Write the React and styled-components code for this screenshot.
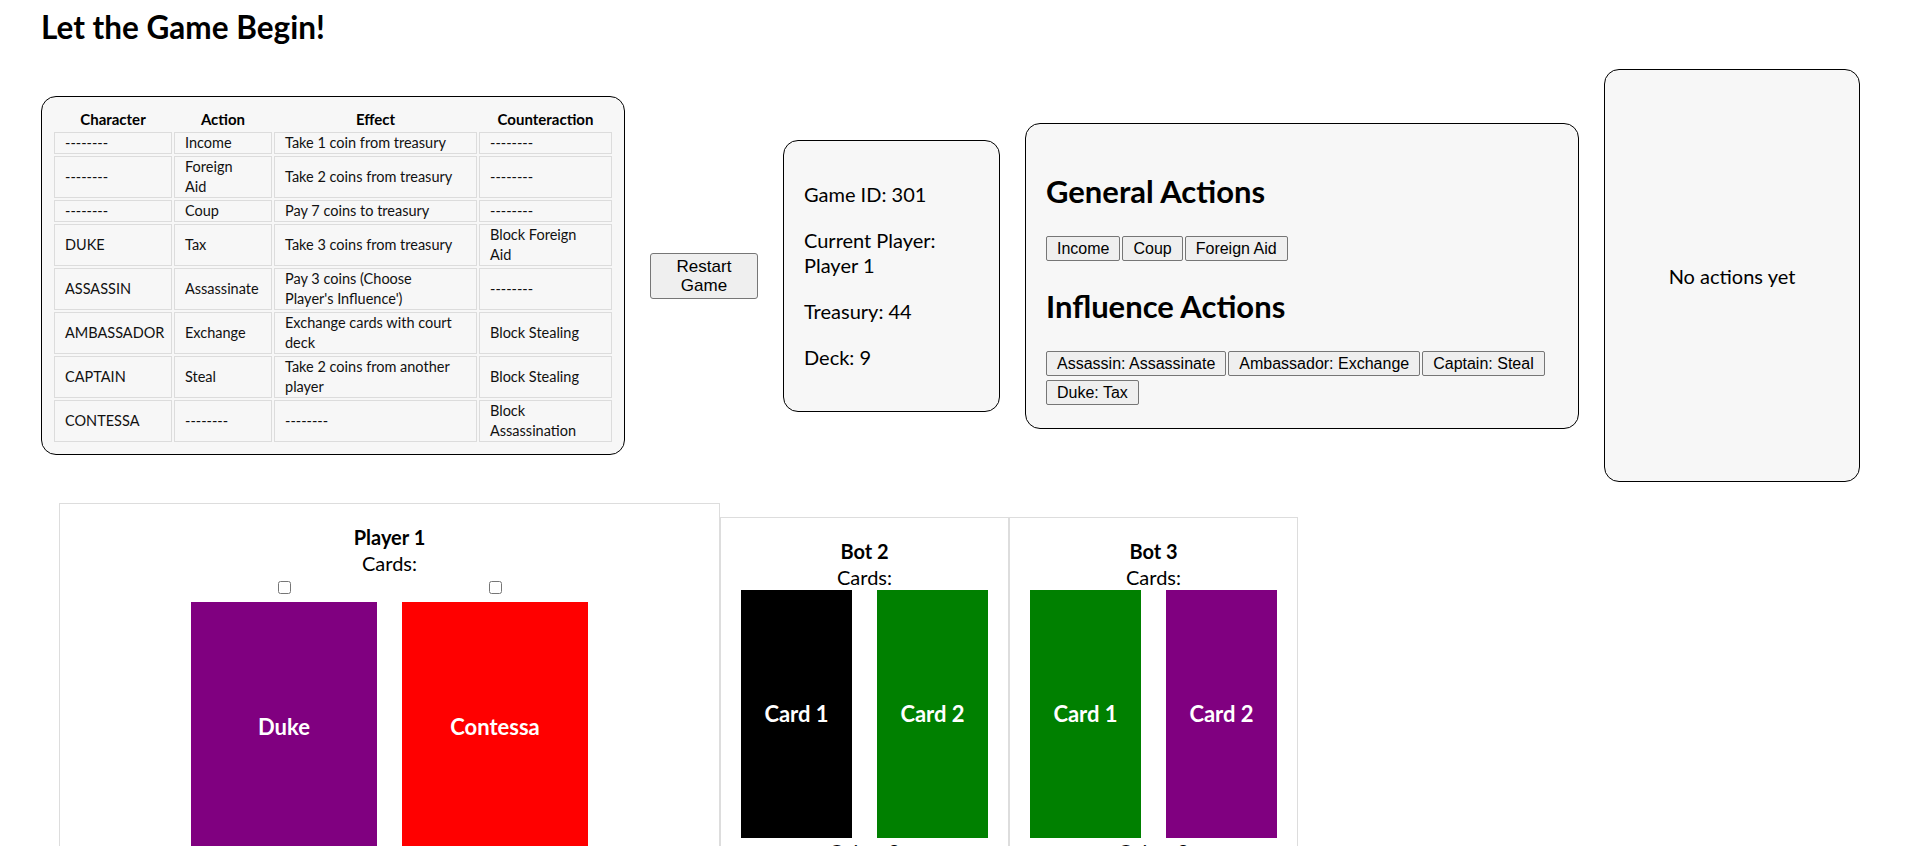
import React from 'react';
import styled, { createGlobalStyle } from 'styled-components';

const rules = [
  ['--------', 'Income', 'Take 1 coin from treasury', '--------'],
  ['--------', ['Foreign', 'Aid'], 'Take 2 coins from treasury', '--------'],
  ['--------', 'Coup', 'Pay 7 coins to treasury', '--------'],
  ['DUKE', 'Tax', 'Take 3 coins from treasury', ['Block Foreign', 'Aid']],
  ['ASSASSIN', 'Assassinate', ['Pay 3 coins (Choose', "Player's Influence')"], '--------'],
  ['AMBASSADOR', 'Exchange', ['Exchange cards with court', 'deck'], 'Block Stealing'],
  ['CAPTAIN', 'Steal', ['Take 2 coins from another', 'player'], 'Block Stealing'],
  ['CONTESSA', '--------', '--------', ['Block', 'Assassination']],
];

const columns = [
  { label: 'Character', width: 118 },
  { label: 'Action', width: 98 },
  { label: 'Effect', width: 203 },
  { label: 'Counteraction', width: 133 },
];

const generalActions = ['Income', 'Coup', 'Foreign Aid'];
const influenceActions = ['Assassin: Assassinate', 'Ambassador: Exchange', 'Captain: Steal', 'Duke: Tax'];

const bots = [
  { name: 'Bot 2', cards: [{ label: 'Card 1', color: '#000000' }, { label: 'Card 2', color: '#008000' }], coins: 2 },
  { name: 'Bot 3', cards: [{ label: 'Card 1', color: '#008000' }, { label: 'Card 2', color: '#800080' }], coins: 2 },
];

const renderLines = (value) =>
  Array.isArray(value)
    ? value.map((line, i) => (
        <React.Fragment key={i}>
          {i > 0 && <br />}
          {line}
        </React.Fragment>
      ))
    : value;

const App = () => {
  return (
    <Page>
      <GlobalStyle />
      <Title>Let the Game Begin!</Title>

      <TopRow>
        <RulesPanel>
          <RulesTable>
            <thead>
              <tr>
                {columns.map((c) => (
                  <Th key={c.label} $width={c.width}>{c.label}</Th>
                ))}
              </tr>
            </thead>
            <tbody>
              {rules.map((row, r) => (
                <tr key={r}>
                  {row.map((cell, c) => (
                    <Td key={c}>{renderLines(cell)}</Td>
                  ))}
                </tr>
              ))}
            </tbody>
          </RulesTable>
        </RulesPanel>

        <RestartButton>Restart Game</RestartButton>

        <InfoPanel>
          <InfoLine>Game ID: 301</InfoLine>
          <InfoLine>Current Player: Player 1</InfoLine>
          <InfoLine>Treasury: 44</InfoLine>
          <InfoLine>Deck: 9</InfoLine>
        </InfoPanel>

        <ActionsPanel>
          <SectionTitle>General Actions</SectionTitle>
          <ButtonGroup>
            {generalActions.map((a) => (
              <ActionButton key={a}>{a}</ActionButton>
            ))}
          </ButtonGroup>
          <SectionTitle>Influence Actions</SectionTitle>
          <ButtonGroup>
            {influenceActions.map((a) => (
              <ActionButton key={a}>{a}</ActionButton>
            ))}
          </ButtonGroup>
        </ActionsPanel>

        <LogPanel>No actions yet</LogPanel>
      </TopRow>

      <PlayersRow>
        <PlayerPanel $width={661}>
          <PlayerName>Player 1</PlayerName>
          <div>Cards:</div>
          <CardRow>
            <CardColumn>
              <CheckSlot><input type="checkbox" /></CheckSlot>
              <Card $color="#800080" $w={186} $h={250}>Duke</Card>
            </CardColumn>
            <CardColumn>
              <CheckSlot><input type="checkbox" /></CheckSlot>
              <Card $color="#ff0000" $w={186} $h={250}>Contessa</Card>
            </CardColumn>
          </CardRow>
          <div>Coins: 2</div>
        </PlayerPanel>

        {bots.map((bot) => (
          <PlayerPanel key={bot.name} $width={289}>
            <PlayerName>{bot.name}</PlayerName>
            <div>Cards:</div>
            <CardRow>
              {bot.cards.map((card, i) => (
                <Card key={i} $color={card.color} $w={111} $h={248}>{card.label}</Card>
              ))}
            </CardRow>
            <div>Coins: {bot.coins}</div>
          </PlayerPanel>
        ))}
      </PlayersRow>
    </Page>
  );
};

export default App;

// STYLED COMPONENTS

const GlobalStyle = createGlobalStyle`
  html {
    background: #fff;
  }
  body {
    margin: 8px;
    font-family: Lato, "Segoe UI", "Noto Sans", sans-serif;
    color: #000;
  }
  ::-webkit-scrollbar {
    width: 17px;
  }
  ::-webkit-scrollbar-track {
    background: #f1f1f1;
  }
  ::-webkit-scrollbar-thumb {
    background: #c1c1c1;
    border-left: 2px solid #f1f1f1;
  }
`;

const Page = styled.div`
  padding-left: 33px;
`;

const Title = styled.h1`
  margin: 0;
  font-size: 31.5px;
  line-height: 38px;
  font-weight: 700;
`;

const TopRow = styled.div`
  display: flex;
  align-items: center;
  gap: 25px;
  margin-top: 23px;
`;

const Panel = styled.div`
  box-sizing: border-box;
  background: #f7f7f7;
  border: 1px solid #000;
  border-radius: 15px;
`;

const RulesPanel = styled(Panel)`
  padding: 10px;
`;

const RulesTable = styled.table`
  table-layout: fixed;
  width: 562px;
  border-spacing: 2px;
  font-size: 14.5px;
`;

const Th = styled.th`
  box-sizing: border-box;
  width: ${(p) => p.$width}px;
  padding: 0;
  font-size: 15px;
  line-height: 21px;
  font-weight: 700;
  text-align: center;
`;

const Td = styled.td`
  box-sizing: border-box;
  border: 1px solid #dcdcdc;
  padding: 0 10px;
  line-height: 20px;
  white-space: nowrap;
  text-align: left;
  vertical-align: middle;
  color: #111;
`;

const RestartButton = styled.button`
  box-sizing: border-box;
  width: 108px;
  height: 46px;
  padding: 3px 6px;
  font-family: "Liberation Sans", Arial, sans-serif;
  font-size: 17px;
  line-height: 19px;
  color: #000;
  background: #efefef;
  border: 1px solid #767676;
  border-radius: 3px;
`;

const InfoPanel = styled(Panel)`
  width: 217px;
  padding: 20px;
  font-size: 20px;
  line-height: 25px;
`;

const InfoLine = styled.p`
  margin: 21px 0;
`;

const ActionsPanel = styled(Panel)`
  width: 554px;
  padding: 25px 20px 20px;
`;

const SectionTitle = styled.h2`
  margin: 21px 0;
  font-size: 31px;
  line-height: 43px;
  font-weight: 700;
`;

const ButtonGroup = styled.div`
  display: flex;
  flex-wrap: wrap;
  gap: 4px 2px;
  padding: 2px 0 3px;
`;

const ActionButton = styled.button`
  box-sizing: border-box;
  height: 25px;
  padding: 0 10px;
  font-family: "Liberation Sans", Arial, sans-serif;
  font-size: 16px;
  line-height: 19px;
  color: #000;
  background: #efefef;
  border: 1px solid #767676;
  border-radius: 2px;
`;

const LogPanel = styled(Panel)`
  width: 256px;
  height: 413px;
  display: flex;
  align-items: center;
  justify-content: center;
  font-size: 20px;
`;

const PlayersRow = styled.div`
  display: flex;
  align-items: center;
  margin: 21px 0 0 18px;
`;

const PlayerPanel = styled.div`
  box-sizing: border-box;
  width: ${(p) => p.$width}px;
  padding: 20px;
  border: 1px solid #dddddd;
  text-align: center;
  font-size: 20px;
  line-height: 26px;
`;

const PlayerName = styled.div`
  font-weight: 700;
`;

const CardRow = styled.div`
  display: flex;
  justify-content: center;
  gap: 25px;
`;

const CardColumn = styled.div`
  display: flex;
  flex-direction: column;
  align-items: center;
`;

const CheckSlot = styled.div`
  height: 26px;
  display: flex;
  justify-content: center;
  align-items: flex-start;

  input {
    margin: 5px 0 0;
    width: 13px;
    height: 13px;
  }
`;

const Card = styled.div`
  width: ${(p) => p.$w}px;
  height: ${(p) => p.$h}px;
  background: ${(p) => p.$color};
  color: #fff;
  display: flex;
  align-items: center;
  justify-content: center;
  font-size: 22px;
  font-weight: 700;
`;
